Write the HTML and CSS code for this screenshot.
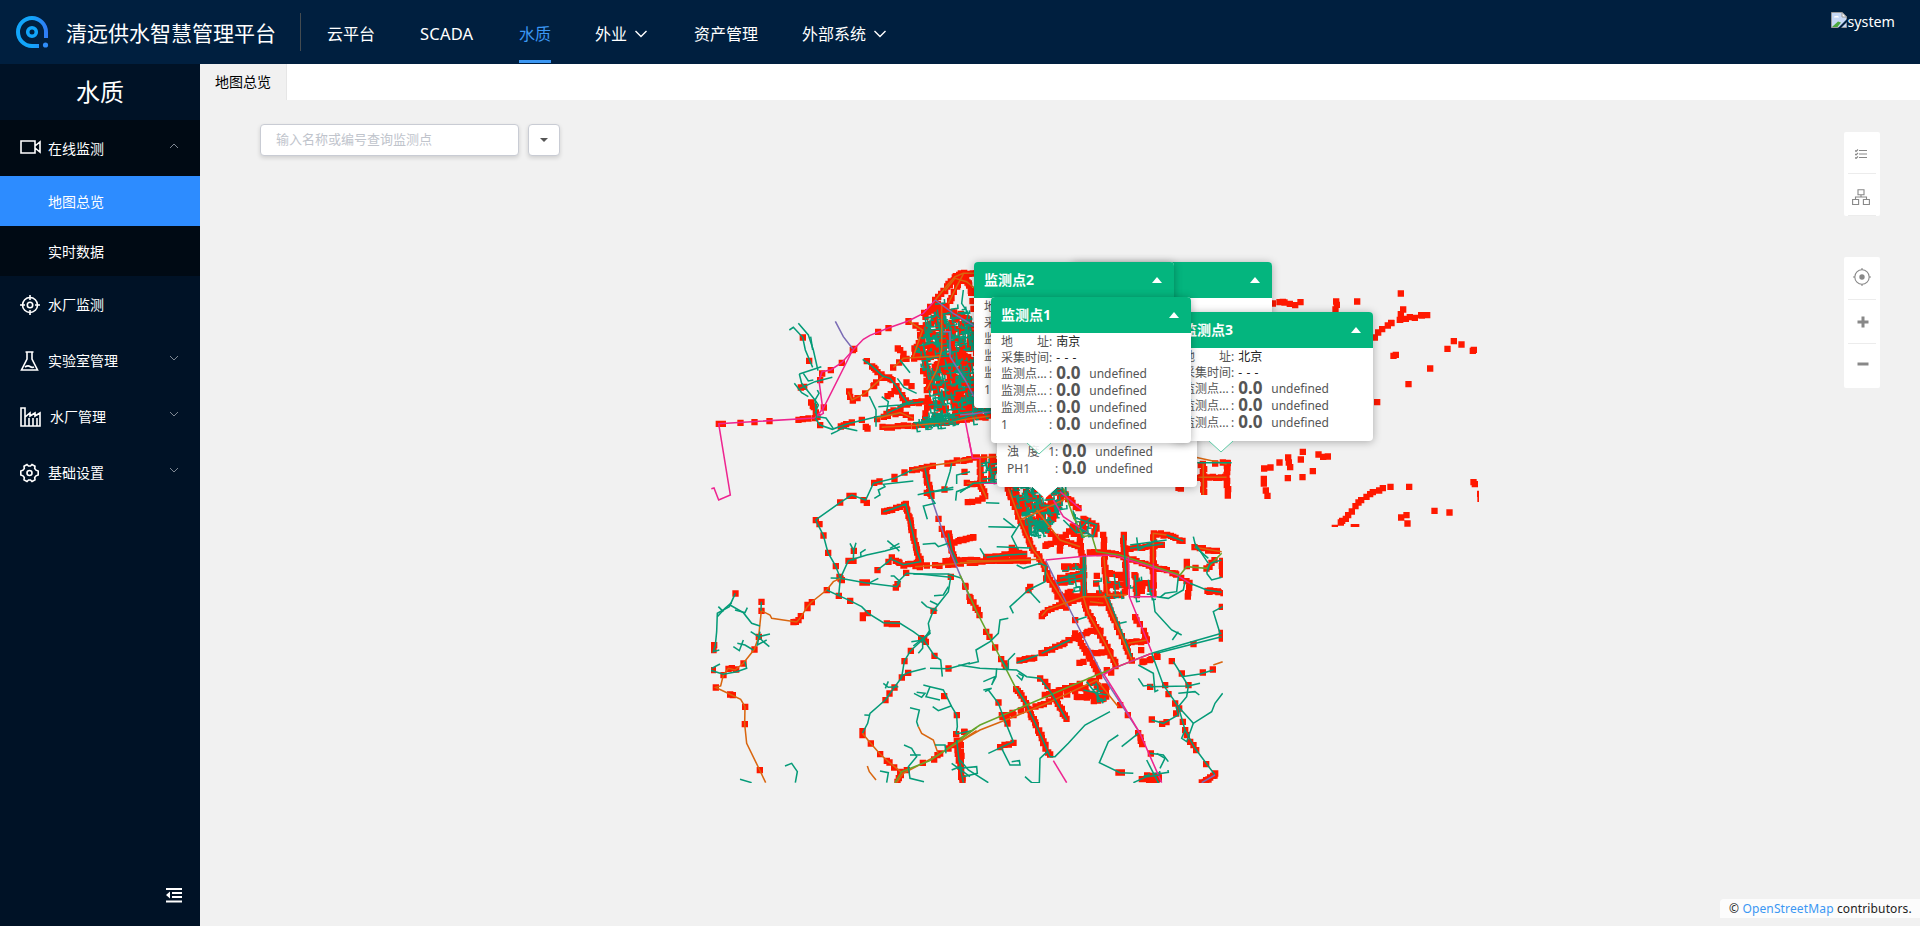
FILE: index.html
```html
<!DOCTYPE html>
<html lang="zh-CN">
<head>
<meta charset="utf-8">
<title>清远供水智慧管理平台</title>
<link rel="stylesheet" href="styles.css">
</head>
<body>
<header class="topbar">
  <svg class="logo" width="34" height="34" viewBox="0 0 34 34" fill="none">
    <defs><linearGradient id="lg" x1="0" y1="0" x2="1" y2="0"><stop offset=".5" stop-color="#12a5fa"/><stop offset="1" stop-color="#2f7df6"/></linearGradient></defs>
    <path d="M24 31H17A14 14 0 1 1 31 17V23" stroke="url(#lg)" stroke-width="4"/>
    <circle cx="17" cy="17" r="4.3" stroke="#12a5fa" stroke-width="3.6"/>
    <circle cx="30.5" cy="30" r="2.6" fill="#2f8dfa"/>
  </svg>
  <h1 class="brand">清远供水智慧管理平台</h1>
  <nav class="nav">
    <a>云平台</a><a class="latin">SCADA</a><a class="on">水质</a>
    <a>外业<svg class="chev" width="12" height="8" viewBox="0 0 12 8"><path d="M.5 1 6 6.5 11.500 1"/></svg></a>
    <a>资产管理</a>
    <a>外部系统<svg class="chev" width="12" height="8" viewBox="0 0 12 8"><path d="M.5 1 6 6.500 11.500 1"/></svg></a>
  </nav>
  <div class="user">
    <svg width="16" height="16" viewBox="0 0 16 16"><path d="M.5.5H11L15.500 5V15.500H.5Z" fill="#c6d8f5" stroke="#9a9a9a"/><path d="M11 .5V5H15.500Z" fill="#fff" stroke="#9a9a9a"/><path d="M3 5.500a1.500 1.500 0 0 1 2-1.500 2 2 0 0 1 3 1.500Z" fill="#fff"/><path d="M1 15 7 9.500l3 1L6.500 15Z" fill="#4ba83e"/><path d="M7 16 16 7v3l-6 6Z" fill="#001f3f"/></svg><span>system</span>
  </div>
</header>
<div class="main">
  <aside class="side">
    <h2 class="side-title">水质</h2>
    <div class="item open"><svg class="ic" width="22" height="16" viewBox="0 0 22 16"><path d="M1 2h14v12H1zM15 7l5-4v10l-5-4"/></svg><span>在线监测</span><svg class="arr" width="10" height="6" viewBox="0 0 10 6"><path d="M1 5l4-4 4 4"/></svg></div>
    <div class="sub on">地图总览</div>
    <div class="sub">实时数据</div>
    <div class="item"><svg class="ic" width="20" height="20" viewBox="0 0 20 20"><circle cx="10" cy="10" r="7.500"/><circle cx="10" cy="10" r="2.700"/><path d="M10 0v5M10 15v5M0 10h5M15 10h5"/></svg><span>水厂监测</span></div>
    <div class="item"><svg class="ic" width="20" height="20" viewBox="0 0 20 20"><path d="M5.500 1h8M7 1v7L1.500 19h16L12 8V1M5 16q3-2 5-.5t4 .5"/></svg><span>实验室管理</span><svg class="arr" width="10" height="6" viewBox="0 0 10 6"><path d="M1 1l4 4 4-4"/></svg></div>
    <div class="item"><svg class="ic" width="22" height="20" viewBox="0 0 22 20"><path d="M1 19V1h4v9l5-4v3l5-3v3l5-3v13zM5 10v9M9 11v8M13 11v8M17 11v8"/></svg><span>水厂管理</span><svg class="arr" width="10" height="6" viewBox="0 0 10 6"><path d="M1 1l4 4 4-4"/></svg></div>
    <div class="item"><svg class="ic" width="20" height="20" viewBox="0 0 20 20"><path d="M7 1.500 8.500 3h2L12 1.500l3 1.700-.3 2.300 1.300 1.700 2.200.8v4l-2.200.8-1.300 1.700.3 2.300-3 1.700L10.500 17h-2L7 18.500l-3-1.700.3-2.300L3 12.800.8 12V8L3 7.200l1.300-1.700L4 3.200z"/><circle cx="9.500" cy="10" r="2.500"/></svg><span>基础设置</span><svg class="arr" width="10" height="6" viewBox="0 0 10 6"><path d="M1 1l4 4 4-4"/></svg></div>
    <svg class="fold" width="16" height="15" viewBox="0 0 16 15" fill="#fff"><path d="M0 0h16v2H0zM6 4h10v2H6zM6 8h10v2H6zM0 12.500h16v2H0zM0 7l4-3.500v7z"/></svg>
  </aside>
  <section class="content">
    <div class="tabs"><div class="tab">地图总览</div></div>
    <div class="map">
      <svg class="pipes" id="pipes" width="1720" height="826" viewBox="200 100 1720 826"></svg>
      <div class="search"><div class="box">输入名称或编号查询监测点</div><div class="drop"><i></i></div></div>

      <div class="pop p4"><div class="hd"><b></b><i></i></div><div class="bd"></div></div>
      <div class="pop p2"><div class="hd"><b>监测点2</b><i></i></div><div class="bd">
        <p class="t"><span>地</span></p><p class="t"><span>采</span></p><p><span>监</span></p><p><span>监</span></p><p><span>监</span></p><p><span>1</span></p></div></div>
      <div class="pop p0"><div class="bd">
        <p><span>浊<em></em>度<em></em>1</span>:<strong>0.0</strong>undefined</p>
        <p><span>PH1</span>:<strong>0.0</strong>undefined</p></div><svg class="tail" width="24" height="12" viewBox="0 0 24 12"><path d="M0 0 12 11 24 0"/></svg></div>
      <div class="pop p3"><div class="hd"><b>监测点3</b><i></i></div><div class="bd">
        <p class="t"><span>地<em></em>址</span>:<u>北京</u></p><p class="t"><span>采集时间</span>:<u class="none">- - -</u></p>
        <p><span>监测点...</span>:<strong>0.0</strong>undefined</p><p><span>监测点...</span>:<strong>0.0</strong>undefined</p><p><span>监测点...</span>:<strong>0.0</strong>undefined</p></div><svg class="tail" width="24" height="12" viewBox="0 0 24 12"><path d="M0 0 12 11 24 0"/></svg></div>
      <div class="pop p1"><div class="hd"><b>监测点1</b><i></i></div><div class="bd">
        <p class="t"><span>地<em></em>址</span>:<u>南京</u></p><p class="t"><span>采集时间</span>:<u class="none">- - -</u></p>
        <p><span>监测点...</span>:<strong>0.0</strong>undefined</p><p><span>监测点...</span>:<strong>0.0</strong>undefined</p><p><span>监测点...</span>:<strong>0.0</strong>undefined</p><p><span>1</span>:<strong>0.0</strong>undefined</p></div><svg class="tail clear" width="24" height="12" viewBox="0 0 24 12"><path d="M0 0 12 11 24 0"/></svg></div>

      <div class="tools top">
        <div class="tool t1"><svg width="12" height="10" viewBox="0 0 12 10"><path d="M4 1.500h8M4 5h8M4 8.500h8M0 1.500l1 1L3 .5M0 5l1 1 2-2M0 8.500l1 1 2-2"/></svg></div>
        <div class="tool t2"><svg width="18" height="16" viewBox="0 0 18 16"><path d="M6 .7h6v5H6zM.6 10.500h6v5h-6zM11.400 10.500h6v5h-6zM9 6v2M3.500 10V8h11v2"/></svg></div>
      </div>
      <div class="tools bottom">
        <div class="tool b1"><svg width="18" height="18" viewBox="0 0 18 18"><circle cx="9" cy="9" r="7.200"/><circle cx="9" cy="9" r="2.700" fill="#888" stroke="none"/><path d="M9 0v2M9 16v2M0 9h2M16 9h2"/></svg></div>
        <div class="tool b2"><svg width="12" height="12" viewBox="0 0 12 12"><path d="M6 .5v11M.5 6h11" stroke-width="3"/></svg></div>
        <div class="tool b3"><svg width="12" height="12" viewBox="0 0 12 12"><path d="M.5 6h11" stroke-width="3"/></svg></div>
      </div>
      <div class="credit">© <a>OpenStreetMap</a> contributors.</div>
    </div>
  </section>
</div>
<script src="map.js"></script>
</body>
</html>
```
FILE: styles.css
```css
*{box-sizing:border-box}
body{margin:0;height:926px;overflow:hidden;display:flex;flex-direction:column;font:14px/1 "Noto Sans","Noto Sans CJK SC",sans-serif;color:#000}
h1,h2,p{margin:0;font-weight:400}
.topbar{height:64px;flex:none;background:#001f3f;color:#fff;display:flex;align-items:flex-start;padding:0 25px 0 15px}
.logo{margin-top:15px;flex:none}
.brand{font-size:21px;line-height:30px;font-family:"Noto Sans CJK SC",sans-serif;margin:17px 0 0 17px;width:234px;height:33px;white-space:nowrap}
.nav{display:flex;gap:44px;border-left:1px solid #444b50;height:38px;margin-top:13px;padding-left:26px}
.nav a{height:50px;font-size:16px;line-height:42px;white-space:nowrap;display:flex;align-items:flex-start}
.nav .latin{width:56px;padding-left:1px;font-size:16.500px;letter-spacing:.2px}
.nav .on{color:#3b97f3;border-bottom:3px solid #3b97f3}
.chev{margin:17px 3px 0 8px;fill:none;stroke:#fff;stroke-width:1.4}
.user{margin-left:auto;display:flex;font-size:14.300px;margin-top:12px}
.user span{line-height:19px}
.main{flex:1;display:flex;min-height:0}
.side{width:200px;background:#001226;color:#fff;display:flex;flex-direction:column}
.side-title{height:56px;line-height:56px;font-size:24px;text-align:center}
.item{height:56px;display:flex;align-items:center;padding:1px 21px 0 20px}
.item span{margin-left:8px;line-height:20px}
.item.open{background:#000a14}
.item.open .ic{margin-top:-4px}
.item.open span{margin-left:6px}
.ic{fill:none;stroke:#fff;stroke-width:1.6}
.arr{margin:-6px 0 0 auto;fill:none;stroke:#7e8792}
.sub{height:50px;padding-left:48px;line-height:51px;background:#000a14}
.sub.on{background:#2d8cff}
.fold{margin:auto 18px 23px auto}
.content{flex:1;display:flex;flex-direction:column;min-width:0}
.tabs{height:36px;background:#fff;display:flex}
.tab{width:87px;background:#f1f1f1;border-right:1px solid #e6e6e6;text-align:center;line-height:35px}
.map{flex:1;position:relative;background:#f1f1f1;overflow:hidden}
.pipes{display:block}
.search{position:absolute;left:60px;top:24px;display:flex;gap:9px}
.box,.drop{height:32px;background:#fff;border:1px solid #c9ccd4;border-radius:4px;box-shadow:0 2px 4px rgba(0,0,0,.14)}
.box{width:259px;padding-left:15px;font-size:13px;line-height:28px;color:#c0c4cc}
.drop{width:32px;display:flex;align-items:center;justify-content:center}
.drop i{border:4.500px solid transparent;border-top-color:#555;border-bottom:0}
.pop{position:absolute;width:200px;background:#fff;border-radius:4px;box-shadow:0 1px 9px rgba(0,0,0,.3);font-size:12px;color:#555}
.p4{left:872px;top:162px;height:140px}
.p2{left:774px;top:162px;height:146px}
.p0{left:797px;top:225px;height:162px;padding-top:118px}
.p3{left:973px;top:212px;height:129px}
.p1{left:791px;top:197px;height:146px}
.hd{height:36px;background:#04b57e;border-radius:4px 4px 0 0;color:#fff;font-size:14px;line-height:36px;display:flex;justify-content:space-between;align-items:center;padding:0 12px 0 10px}
.hd b{margin-top:-1px}
.hd i{border:5px solid transparent;border-bottom:6px solid #fff;border-top:0}
.bd{padding:0 10px}
.bd p{height:17px;line-height:17px;display:flex;white-space:nowrap}
.bd p.t{height:16px;line-height:17px}
.bd span{width:48px;display:flex}
.bd em{flex:1}
.bd u{text-decoration:none;color:#222;margin-left:4px}
.bd .none{letter-spacing:.6px}
.bd strong{font-size:17px;line-height:15px;margin:0 8px 0 4px;width:25px;color:#555}
.tail{position:absolute;left:36px;top:100%;fill:#fff;stroke:#5cc9a4}
.p0 .tail{stroke:#fff}
.tail.clear{fill:rgba(255,255,255,.85)}
.tools{position:absolute;left:1644px;width:36px;background:#fff;border-radius:2px;display:flex;flex-direction:column}
.tools.top{top:32px;height:84px}
.tools.bottom{top:157px;height:131px}
.tool{display:flex;align-items:center;justify-content:center;margin:0 4px;border-bottom:1px solid #ececec}
.tool svg{fill:none;stroke:#888;stroke-width:1.1}
.t1{height:42px;padding:3px 3px 0 0}
.t2{height:42px;padding:5px 3px 0 0}
.b1{height:43px;padding-bottom:2px}
.b2{height:44px}
.b3{height:43px;border:0;padding-bottom:4px}
.b2 svg,.b3 svg{margin-left:2px}
.credit{position:absolute;right:0;bottom:8px;width:200px;height:19px;line-height:20px;padding-left:9px;background:rgba(255,255,255,.8);font-size:12px;letter-spacing:.14px;color:#222;white-space:nowrap;border-radius:4px 0 0 0}
.credit a{color:#3b97f3}
```
FILE: map.js
```javascript
// Pipe network. Each sheet has its own origin; coordinates are thirds of a pixel.
// Row: colour key, marker spacing (0 none, 'v' each vertex), points.
const C = {t:'#059b78', o:'#d9660f', k:'#ee2590', p:'#7b6cb5', g:'#66a52a', n:'none'};
const sheets = [
{x:700,y:250,rows:[
['k',0,'34,716 42,714 56,750 91,735 56,521 345,504 370,475 458,300'],
['k',0,'345,504 370,490 357,392 366,365 392,360 425,338 462,297 490,268 510,256 565,234 625,213 670,190 706,150'],
['n','v','56,521 68,521 121,518 163,516 208,513 295,509 308,507 325,505 345,504 371,472 366,370 360,390 392,360 425,338 458,300 462,296 534,245 565,234 625,213 672,188 690,170'],
['k',0,'795,508 817,622'],
['p',0,'406,214 430,260 458,296'],
['t',0,'268,240 280,232 308,262 316,300 338,352'],['t',0,'295,220 325,255 340,300 354,362'],
['t',0,'338,300 332,260'],['t',0,'298,372 364,350'],['t',0,'298,372 305,400 345,450 350,504'],['t',0,'300,415 345,395 397,382'],['t',0,'310,370 325,393 340,390'],['t',0,'283,400 305,428 325,440'],['t',0,'352,420 357,430 345,450 355,465 345,490'],
['t',0,'345,504 360,525 397,538 440,522 490,510 530,500 600,490'],['t',0,'352,500 378,504 400,536'],['t',0,'393,552 410,544 430,533 472,542'],
['n','v','308,262 327,332 302,412 312,410 360,525 455,517 485,509 502,535 497,530 352,500'],
['n',10,'335,455 342,470 350,500'],['n',9,'420,530 452,516'],
['o',10,'545,532 650,526 740,516 870,498'],['t',0,'640,518 750,515 870,480'],['p',0,'780,495 872,486'],['t',0,'700,502 872,476'],
['o',0,'445,425 456,450 495,430 550,380'],['n','v','447,424 450,440 458,451 472,444 495,430 520,408'],
['t',10,'500,335 520,352 548,378 570,385 590,410 605,435 628,465'],['t',0,'488,328 510,345'],
['n',10,'520,405 548,380'],['n',11,'560,438 600,412'],
['t',0,'508,438 528,480 528,530'],['t',0,'545,440 565,455 560,485'],['t',0,'535,470 600,465 640,452'],['o',12,'530,505 600,488 640,505'],
['t',10,'560,490 620,462 670,455'],
['o',12,'580,352 610,325 660,322 720,318'],['n',10,'594,297 618,318'],['o',12,'625,213 668,240 650,290 640,320'],['t',0,'592,385 612,412 650,430'],['t',0,'600,330 630,368'],['n',10,'620,395 645,415'],
['o',9,'706,150 722,130 745,102 765,80 790,70 835,70'],['o',12,'790,72 770,110 745,160'],['o',12,'735,122 765,85 800,95 830,120'],
['t',0,'790,120 785,160 805,190 800,210'],['n',14,'800,90 815,130 822,190'],
['o',14,'725,165 725,300 710,360 680,420'],['p',0,'706,150 760,190 840,238'],['p',0,'730,245 750,245 750,320 795,390 822,440']
],dense:[['670,210 706,150 790,180 870,230 870,495 740,515 650,515 690,450 660,330 640,300',270,270],['640,520 700,490 740,515',50,0],['670,200 710,150 820,220 870,480 680,480',90,100]]},
{x:1200,y:270,rows:[
['n',14,'220,100 252,96 285,106 312,92'],['n',11,'408,96 408,120'],['n',13,'525,200 545,175 575,157 600,150 630,143 665,135 697,130'],['n',11,'603,130 615,106'],
['n','v','471,94 602,70 761,213 784,223 742,236 818,242 821,239 580,257 587,254 690,295 625,342 531,396 627,650 571,650 703,722 748,727 308,545 211,592 238,577 355,553 338,603 622,760 461,771 468,771 820,636 824,642'],
['n',8,'841,672 841,690'],
['n',10,'190,595 190,605'],['n',10,'190,625 193,645'],['n',11,'197,660 201,685'],['n',9,'262,562 268,595'],['n',9,'265,624 268,610'],['n',9,'370,558 390,561'],['n',6,'303,566 309,563'],['n',8,'308,622 314,615'],
['n',12,'405,773 435,745 465,710 485,688 520,668 552,654'],['n',9,'604,740 630,734']]},
{x:700,y:440,rows:[
['t',0,'347,240 420,188 455,165 497,180 520,130 583,115 636,90 680,80'],['o',0,'636,90 700,76 755,68 815,57'],
['n','v','347,240 358,252 420,187 448,167 460,167 490,180 500,188 522,128 538,124 583,117 583,110 613,97 636,90 650,88 665,84 680,80 698,77 742,70 757,68 790,62 808,58'],
['t','v','347,240 370,286 384,338 407,378 421,415 416,467'],
['t',0,'421,415 445,362 500,345 555,333 600,320'],['n','v','445,362 460,362 461,332 425,420 418,410'],['t',0,'450,310 461,332 468,308'],['t',0,'461,332 460,362'],['t',0,'483,350 482,338 497,328'],['t',0,'562,302 590,325 598,334'],['t',0,'570,325 598,310'],
['t',0,'392,414 421,415 495,428 590,440 600,425 582,408 572,408'],['t',0,'510,428 535,415'],['t',0,'590,430 620,400 660,402 752,412'],['t',0,'640,402 745,402 785,415'],['n','v','487,427 500,427 587,442 592,432 618,398 752,410'],
['t',0,'523,175 540,165 535,150 555,140 550,133 640,123'],
['t',8,'550,215 575,208 617,192 627,232 640,285 650,330 662,365 610,374 575,358'],['t','v','532,390 565,365 575,352'],
['o',15,'645,380 720,375 830,366'],['n',8,'735,362 820,358'],
['o',0,'421,415 400,425 380,450 335,486 322,500 300,535 290,546 215,535 210,525 184,512 176,590 163,628 130,670 105,690 85,685 70,705 62,738 47,742 95,765 122,778 135,800 134,852 140,910 179,990 197,1028'],
['n','v','335,486 322,494 322,504 302,528 295,540 287,545 280,546 184,512 184,485 176,590 163,628 130,670 108,688 95,684 85,686 70,705 47,742 90,763 98,765 135,800 134,852 179,990 106,460 42,615 40,630 38,690'],
['t',0,'184,485 183,512'],['t',0,'106,460 88,500 52,520 50,575 46,615 40,635 58,630'],['t',0,'52,530 75,505 95,488'],['t',0,'70,515 55,500'],['t',0,'90,495 130,518 155,550 180,558'],['t',0,'105,510 135,518 142,503'],
['t',0,'100,620 118,632 130,600'],['t',0,'112,610 135,615 160,630'],['t',0,'152,575 176,590 210,582'],['t',0,'176,590 190,605 208,620'],['t',0,'180,575 172,615 200,600'],['t',0,'30,690 70,703 110,695 140,685 135,665'],['t',0,'35,685 60,672'],
['t',0,'380,450 416,467 450,482 485,500 505,520 550,548 600,550 640,575 670,597'],['n','v','380,450 416,467 450,482 503,519 488,526 488,534 560,550 575,552 590,552 663,594 672,598 677,605'],
['t','v','670,597 632,632 613,663 605,712 583,742 556,780'],['n','v','568,760'],['t',0,'556,780 510,820 503,850 487,880'],
['t',0,'670,597 703,647 722,660 727,710'],['t',0,'600,710 624,698 677,685'],['t',0,'690,685 745,686 810,668'],['n','v','703,647 624,698 745,685'],
['t',0,'752,412 745,455 700,512 685,550 690,580 670,597'],['t',0,'664,485 680,500 712,512'],['t',0,'690,483 715,495'],['t',0,'702,467 730,465 745,440'],['n','v','700,512'],
['t',0,'634,605 670,600 690,570'],['t',0,'655,640 668,625 668,597'],['t',0,'640,618 690,578'],['t',0,'550,730 565,742 595,740'],['t',0,'556,745 565,724'],['t',0,'493,825 510,826'],
['o',0,'487,880 512,910 540,942 565,965 590,985 605,998 585,1028'],['n','v','487,873 487,885 512,910 540,942 560,962 568,967 582,982 600,995'],['n',8,'604,996 588,1028'],
['o',0,'590,1028 610,1000 715,945 830,872'],['g',0,'585,1028 605,995 690,962 780,900 830,862'],['n','v','620,990 668,968 702,958 712,945 720,940 745,925 752,915 765,915 778,905'],
['t',0,'670,735 690,740 730,750 755,800 770,825 772,860 768,882'],['t',0,'690,740 678,770 720,780'],['t',0,'642,760 665,772 675,760 650,757'],['t',0,'698,800 715,812 755,797'],['n','v','732,768 770,825 768,882 793,875'],['t',0,'768,882 815,872'],
['t',0,'630,803 658,810 650,845 655,860'],['o',0,'655,860 665,880 700,900 714,940'],
['t',7,'770,900 777,960 785,990'],['n',10,'785,1015 785,1028'],['t',0,'755,970 810,1010'],['t',0,'755,990 780,980 790,1028'],
['t',0,'255,978 275,970 292,995 286,1028'],['t',0,'120,1018 155,1028'],['o',0,'502,978 508,995 528,1020'],['t',0,'540,993 565,998 560,1028'],
['t',0,'612,915 635,925 650,950 625,980 630,1015 672,1025'],['t',0,'630,945 662,945'],['t',0,'705,915 735,915 738,940'],
['t',7,'675,85 683,125 693,170'],['p',0,'693,170 740,310 810,475'],['n','v','680,158 693,158 715,236 725,266 732,283 796,440 808,470 810,482'],
['t',7,'745,280 755,330 772,370'],['n',9,'750,310 830,288'],
['t',0,'653,164 760,142'],['t',0,'700,155 760,148'],['n','v','733,148'],['t',0,'755,70 750,95 733,150'],['t',0,'810,95 770,105 770,132'],['t',0,'668,313 705,310 715,320 745,310'],['t',0,'682,238 670,198 705,190 693,170'],['t',0,'810,140 770,155 767,182'],['n','v','793,95']
]},
{x:960,y:440,rows:[
['o',12,'-10,62 50,53 110,50'],['k',0,'25,-10 38,55 60,55 60,130 125,130'],['n',7,'95,50 95,120'],['o',8,'60,60 60,130'],['o',10,'20,130 60,130 80,175'],['n',10,'22,185 80,175'],['t',0,'0,158 40,130 110,125'],['t',0,'78,188 118,190'],
['g',0,'0,405 15,437 50,515 105,622 165,740 205,800'],['n','v','15,437'],['n',9,'32,475 58,525'],['n','v','78,575 88,590 105,622'],['t',9,'122,655 143,688'],['t',7,'170,745 200,795 235,870 270,950'],['k',0,'280,962 320,1028'],
['o',8,'145,145 180,240 220,330 240,355 270,420 320,500'],['n',9,'165,150 195,225'],
['p',0,'257,362 330,510 430,710 540,880'],['k',0,'430,700 480,780 540,880 605,1028'],['n','v','345,540 480,795 503,825'],['n',8,'345,578 380,635 420,710'],['n',9,'535,878 552,925'],['n','v','572,940'],
['o',7,'20,362 80,362 210,360'],['o',0,'0,368 240,358'],['t',10,'80,352 140,345 200,342'],['n',7,'0,300 40,292'],['t',0,'110,320 212,324'],['t',0,'75,350 60,325'],['n',7,'155,325 190,345'],
['t',0,'170,375 190,385 240,370 262,380'],['t',0,'85,260 165,262 130,235'],['t',0,'180,250 155,290 175,330'],
['t',0,'257,380 255,425 205,450 150,500 160,520'],['n','v','205,450 210,440 258,415'],['t',0,'205,450 240,488'],
['k',0,'257,360 380,348 460,345 650,405 690,430'],['g',0,'310,145 340,230 370,290 395,285 410,335 480,345 660,405 680,380 740,385 785,340'],
['n',9,'390,338 460,340 520,360 650,402'],['n',9,'650,405 690,430 680,470'],['n','v','680,365 680,378 706,383'],['n',8,'740,385 770,350'],
['t',0,'690,430 740,450 785,457'],['n',7,'740,452 790,457'],
['t',6,'370,350 370,470'],['t',0,'376,350 376,470'],['o',7,'432,350 436,400 442,465'],['t',8,'490,285 495,360 500,440'],['n',9,'430,285 432,330'],
['k',0,'505,350 508,470 575,635'],['k',10,'580,370 580,470'],['k',0,'508,470 590,470'],['o',8,'580,370 580,280 620,285'],['t',7,'620,285 670,303'],['t',8,'510,325 610,312'],['t',0,'510,315 620,300'],['t',0,'530,292 535,330 590,300'],['t',7,'525,405 530,465'],['n',8,'545,430 575,425'],['n',8,'440,430 500,438'],['n',8,'450,400 490,405'],
['o',9,'703,322 785,335'],['t',0,'700,290 705,310 745,370'],['t',0,'740,400 755,420 785,412'],['t',0,'785,360 750,370 740,400'],['n',8,'785,360 785,412'],['t',0,'745,355 705,320'],
['t',9,'300,415 370,398'],['t',8,'290,430 365,415'],['n',9,'325,380 370,380'],['n',9,'290,470 360,470'],['t',0,'340,445 360,440 360,452 340,455 345,448'],
['o',8,'432,465 450,510 485,590 518,665'],['t',0,'445,475 515,650'],['o',8,'370,470 385,520 430,600 470,680'],['n',8,'245,640 330,600 400,570 430,575'],['o',9,'300,495 370,470 440,470'],['o',8,'245,528 262,508 300,495'],['o',0,'440,465 500,465'],['n',8,'440,465 490,465'],['o',10,'390,485 430,490'],
['t',0,'245,640 330,600'],['n',6,'180,660 225,655'],['t',0,'170,668 235,645'],['n',8,'390,640 450,638'],['n','v','358,668 370,665 543,630'],['n',7,'525,530 540,555'],['o',9,'505,610 560,600'],['n',9,'550,570 558,600'],['t',0,'350,540 380,530'],['t',0,'480,550 500,545'],
['n',9,'545,668 590,652'],['n',8,'440,690 458,700'],
['g',0,'0,895 60,855 200,795 410,705 575,640'],['k',0,'430,705 460,685 575,640'],['o',0,'0,905 60,870 150,835 260,790 410,720 475,800'],['n',16,'125,830 250,790 360,745 415,715'],['n',9,'255,765 350,735'],['n','v','12,875 240,715 255,725 262,738'],
['t',0,'575,640 785,580'],['t',0,'590,640 785,590'],['n','v','590,645 700,612 785,578 785,595 785,500'],
['t',0,'575,640 610,735 655,800 675,870 705,925 765,1005'],['n','v','592,650 615,735 625,762 645,790 657,805 648,820 668,845 675,870 680,885 690,905 700,915 708,930 738,972 765,1000'],['p',7,'765,1005 725,1028'],
['t',0,'-5,675 60,685 170,690 200,710 240,715 275,760 320,840'],['n',9,'275,755 320,840'],['n',8,'350,770 440,770 400,785'],['n',8,'390,720 440,760'],['t',0,'380,725 430,790'],['t',0,'370,750 440,765'],
['t',0,'85,750 115,790 130,830 160,905 85,940'],['t',0,'70,750 95,745 75,755'],['n','v','115,787 125,825 140,838 142,850 160,825 160,908'],['n',8,'120,920 155,908'],['t',0,'125,925 150,975 180,975 178,962 155,965'],['t',0,'110,685 108,710 95,735 105,710 70,725'],['t',0,'145,535 120,540 115,580 90,605 48,630 55,665 25,672'],['t',0,'165,640 145,660 145,690'],['t',0,'170,705 185,720 190,708 175,700'],
['t',0,'270,950 285,950 325,910 375,855 450,815'],['t',0,'475,885 445,905 418,968 480,998 520,1000'],['n','v','475,997 485,997'],['t',0,'195,1010 215,1028 238,1028 240,955 262,935'],['n',9,'0,900 5,1028'],['t',0,'0,960 25,990 85,1028'],['t',0,'0,985 50,980 52,1000 10,1010'],
['t',0,'655,800 700,850 755,815 765,790 788,760'],['t',0,'570,740 685,738 720,730'],['t',0,'685,738 680,770 655,800'],['t',0,'685,738 665,705 640,665'],['t',0,'655,760 705,755 718,765'],['t',0,'675,870 665,895 680,905 700,850'],['n','v','570,740 665,700 685,735 635,663 728,697 758,688 575,838'],
['t',0,'575,840 610,850 655,825 648,800'],['n',7,'605,850 620,845'],['t',0,'760,690 720,702 665,710'],['o',0,'760,675 788,665'],
['t',0,'580,475 585,515 635,570 665,585'],['t',0,'655,575 637,600'],['t',0,'780,580 760,515 788,500'],['t',0,'535,675 580,700 585,755 595,750'],['t',0,'535,715 550,738 575,735'],['t',0,'590,470 625,475 670,450 675,425'],['t',0,'600,472 615,460 650,455 655,410'],
['t',0,'535,880 485,920'],['t',0,'570,940 610,945 625,965'],['t',0,'590,940 615,955 600,985'],['t',0,'560,960 595,1028'],['n',8,'545,1018 595,1018'],['t',0,'520,1028 560,1010 598,1005'],
['n',9,'230,250 300,300 300,340'],['n',9,'255,315 300,300 345,255'],['o',0,'180,240 320,175'],['o',0,'230,210 300,300 360,320'],['n',8,'300,300 355,320'],['k',0,'280,180 310,230 400,290'],['n',9,'360,290 365,345'],['k',0,'300,155 365,210'],['n',8,'305,155 360,210'],['n',9,'340,280 375,240 410,255 400,290'],['t',0,'350,235 410,255 400,290 360,265 390,235'],['t',0,'310,240 350,280'],
['o',0,'700,50 800,72'],['t',0,'712,68 815,68'],['o',7,'730,72 730,165'],['n',6,'800,70 800,110 804,165'],['n',8,'790,68 810,68'],['o',9,'715,112 800,112'],['n','v','655,143 662,145 722,75 765,70']
],dense:[['145,130 310,130 300,200 280,240 230,275 205,270 175,210',105,90],['200,240 260,240 250,275 215,275',32,0],['60,60 110,60 110,125 60,125',16,10],['300,370 360,370 360,470 310,470',9,8],['330,200 400,240 370,290 320,240',10,6],['400,400 500,400 500,470 400,460',9,12],['510,430 580,400 580,465 515,465',7,6],['350,730 440,730 440,790 380,780',6,14],['550,1000 600,1000 600,1028 550,1028',4,7]]}
];
let seed = 7;
const rnd = () => (seed = (seed * 16807) % 2147483647) / 2147483647;
const parse = s => s.trim().split(' ').map(p => p.split(',').map(Number));
const inside = (x, y, q) => {
  let r = false;
  for (let i = 0, j = q.length - 1; i < q.length; j = i++)
    if ((q[i][1] > y) !== (q[j][1] > y) && x < (q[j][0] - q[i][0]) * (y - q[i][1]) / (q[j][1] - q[i][1]) + q[i][0]) r = !r;
  return r;
};
let html = '<defs><clipPath id="land"><path d="M711 260H1479V527H1223V783H711Z"/></clipPath></defs><g clip-path="url(#land)">';
let under = '', over = '';
for (const s of sheets) {
  let marks = '', lines = '';
  const mark = (x, y) => { marks += `M${Math.round(x) - 9} ${Math.round(y) - 9}h19v19h-19z`; };
  for (const [c, step, str] of s.rows) {
    const pts = parse(str);
    if (step === 'v') pts.forEach(p => mark(p[0], p[1]));
    else if (step) for (let i = 1; i < pts.length; i++) {
      const [a, b] = pts[i - 1], dx = pts[i][0] - a, dy = pts[i][1] - b, len = Math.hypot(dx, dy);
      for (let d = 0; d < len; d += step * (0.8 + rnd() * 1.2)) mark(a + dx * d / len + rnd() * 5 - 2.5, b + dy * d / len + rnd() * 5 - 2.5);
    }
    if (c !== 'n') lines += `<polyline points="${str}" stroke="${C[c]}"/>`;
  }
  for (const [str, nl, nm] of s.dense || []) {
    const q = parse(str), xs = q.map(p => p[0]), ys = q.map(p => p[1]);
    const x0 = Math.min(...xs), y0 = Math.min(...ys), w = Math.max(...xs) - x0, h = Math.max(...ys) - y0;
    const pick = f => { let n = 0, g = 0; while (n < f.n && g++ < 9000) { const x = x0 + rnd() * w, y = y0 + rnd() * h; if (inside(x, y, q)) { f.go(x, y); n++; } } };
    pick({n: nm, go: mark});
    let d = '';
    pick({n: nl, go: (x, y) => {
      const a = rnd() < .5 ? -0.15 : 1.42, l = 8 + rnd() * 26, e = 5 + rnd() * 10;
      d += `M${x | 0} ${y | 0}l${(Math.cos(a) * l) | 0} ${(Math.sin(a) * l) | 0}l${(Math.sin(a) * e) | 0} ${(-Math.cos(a) * e) | 0}`;
    }});
    lines = `<path d="${d}" stroke="${C.t}"/>` + lines;
  }
  const t = `<g transform="translate(${s.x} ${s.y}) scale(.33333)"`;
  under += `${t}><path d="${marks}" fill="#ff1800"/></g>`;
  over += `${t} fill="none" stroke-width="4.6">${lines}</g>`;
}
document.getElementById('pipes').innerHTML = html + under + over + '</g>';
```
